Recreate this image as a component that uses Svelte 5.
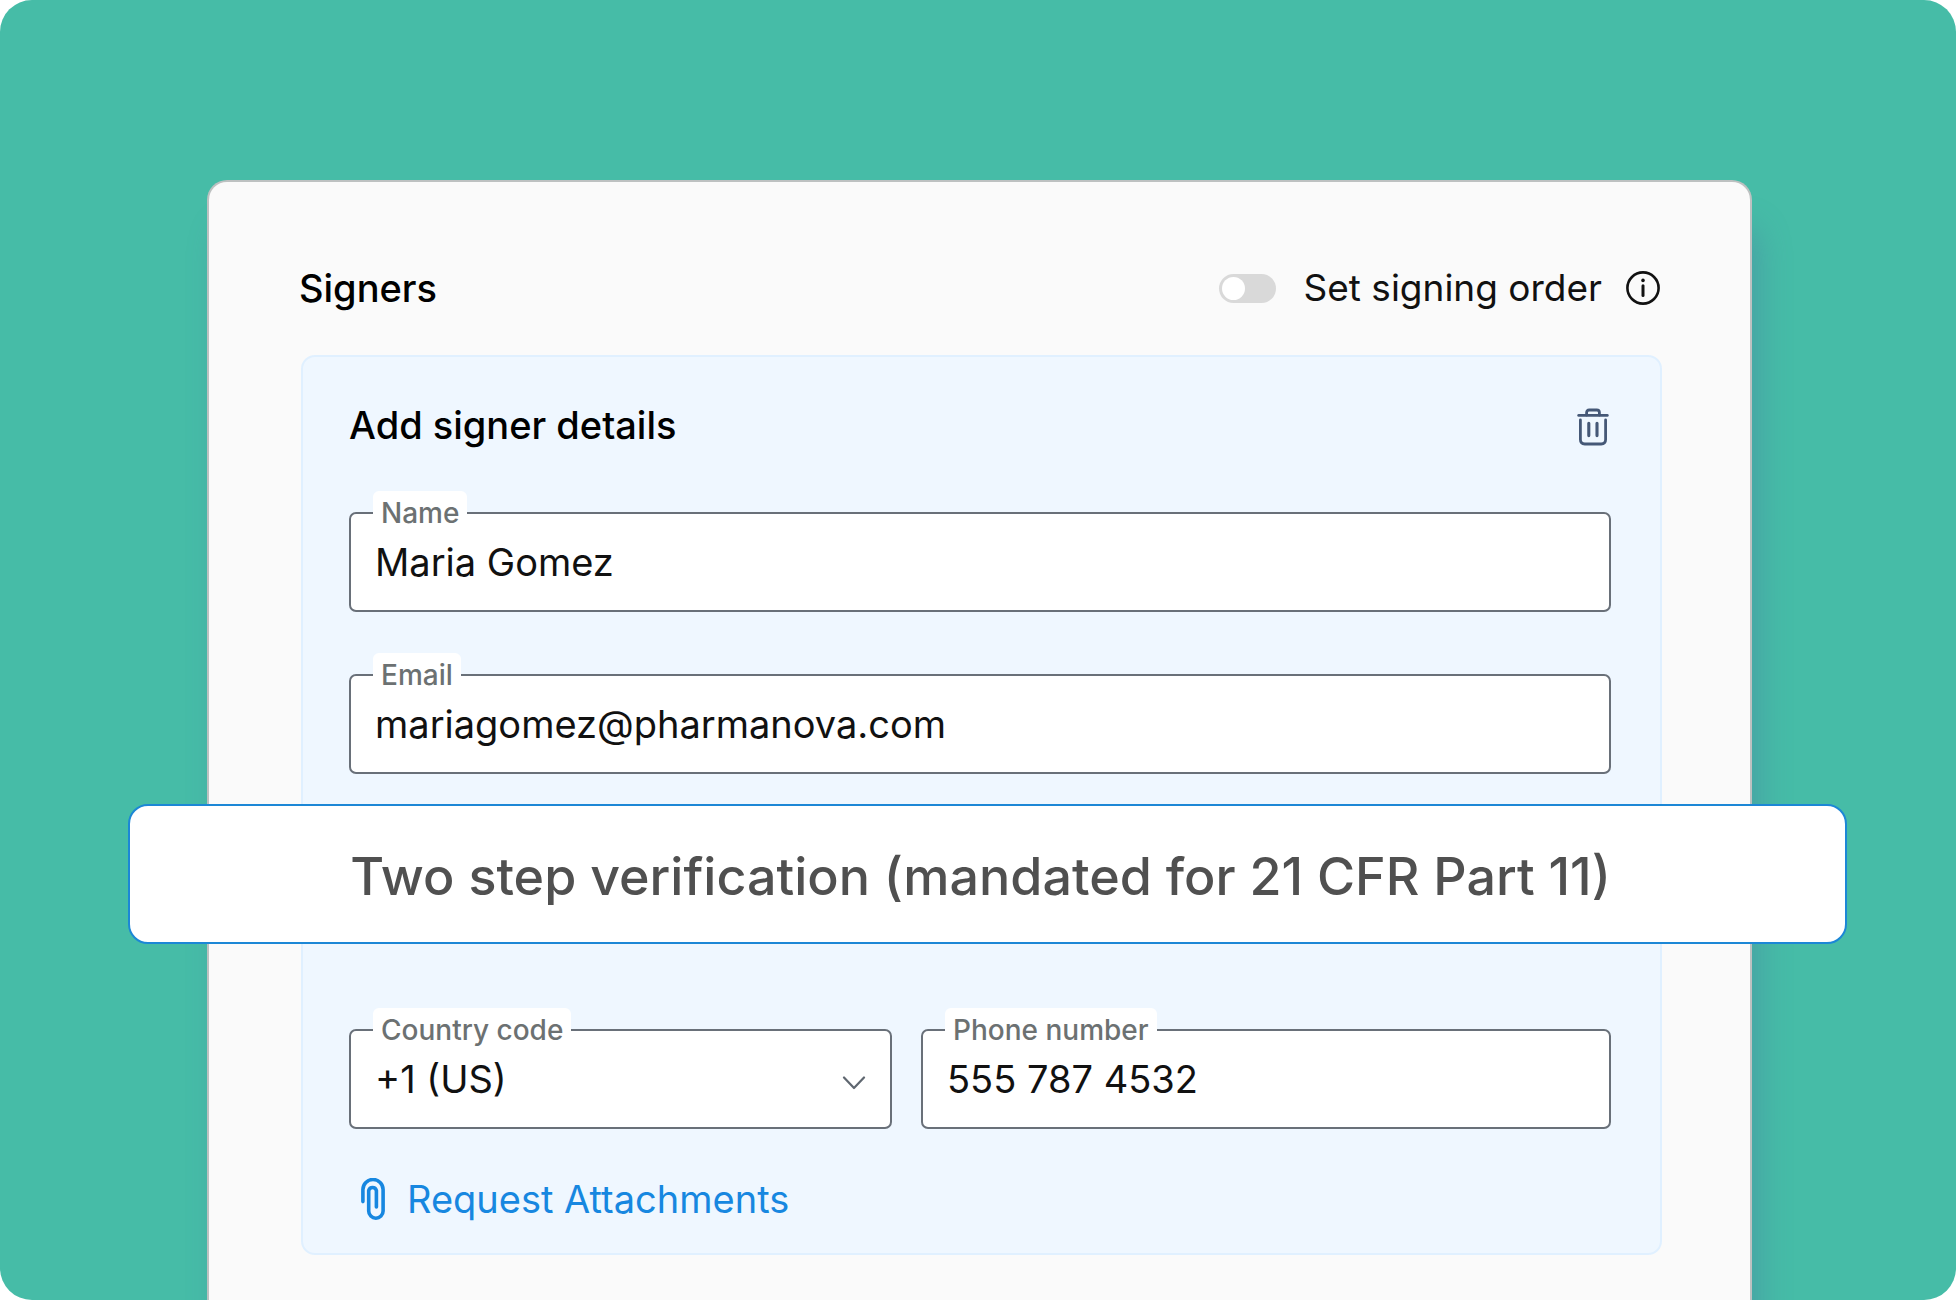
<script>
  let name = $state('Maria Gomez');
  let email = $state('mariagomez@pharmanova.com');
  let country = $state('+1 (US)');
  let phone = $state('555 787 4532');
  let ordered = $state(false);
</script>

<main class="stage">
  <section class="card">
    <header class="card-head">
      <h1>Signers</h1>
      <div class="order">
        <input id="order" class="switch" type="checkbox" role="switch" bind:checked={ordered} />
        <label for="order">Set signing order</label>
        <button class="icon-button" type="button" aria-label="About signing order">
          <svg width="34" height="34" viewBox="0 0 34 34" fill="none" stroke="#111" stroke-linecap="round">
            <circle cx="17" cy="17" r="15.6" stroke-width="2.6" />
            <path d="M17 14.8V24.6" stroke-width="3" />
            <circle cx="17" cy="9.4" r="1.8" fill="#111" stroke="none" />
          </svg>
        </button>
      </div>
    </header>

    <form class="panel">
      <div class="panel-head">
        <h2>Add signer details</h2>
        <button class="icon-button delete" type="button" aria-label="Delete signer">
          <svg width="32" height="38" viewBox="0 0 32 38" fill="none" stroke="#455877" stroke-width="2.8" stroke-linecap="round" stroke-linejoin="round">
            <path d="M1.7 7.4H30.3" />
            <path d="M9.6 7V4.6Q9.6 2 12.2 2H19.8Q22.4 2 22.4 4.6V7" />
            <path d="M3.4 12V31.6Q3.4 36 7.8 36H24.2Q28.6 36 28.6 31.6V12" />
            <path d="M11.8 15.3V27.6M20 15.3V27.6" stroke-width="3.1" />
          </svg>
        </button>
      </div>

      <div class="field">
        <label for="name">Name</label>
        <input id="name" type="text" bind:value={name} />
      </div>
      <div class="field">
        <label for="email">Email</label>
        <input id="email" type="email" bind:value={email} />
      </div>

      <p class="banner">Two step verification (mandated for 21 CFR Part 11)</p>

      <div class="row">
        <div class="field">
          <label for="country">Country code</label>
          <select id="country" bind:value={country}>
            <option>+1 (US)</option>
            <option>+44 (UK)</option>
          </select>
          <svg class="chevron" width="24" height="14" viewBox="0 0 24 14" fill="none" stroke="#5f6770" stroke-width="2.2" stroke-linecap="round" stroke-linejoin="round" aria-hidden="true">
            <path d="M2 1.5L12 12L22 1.5" />
          </svg>
        </div>
        <div class="field">
          <label for="phone">Phone number</label>
          <input id="phone" type="tel" bind:value={phone} />
        </div>
      </div>

      <a class="attach" href="#attachments">
        <svg width="24" height="42" viewBox="0 0 24 42" fill="none" stroke="#1787e0" stroke-width="3.6" stroke-linecap="round" aria-hidden="true">
          <path d="M1.9 23.6V11.6A10.1 10.1 0 0 1 22.1 11.6V33A7.2 7.2 0 0 1 7.7 33V12.4A4 4 0 0 1 15.4 12.4V29" />
        </svg>
        Request Attachments
      </a>
    </form>
  </section>
</main>

<style>
  :global(body) {
    background: #fff;
  }

  .stage {
    box-sizing: border-box;
    display: flex;
    height: 100vh;
    min-height: 1300px;
    padding: 180px 204px 0 207px;
    overflow: hidden;
    border-radius: 32px;
    background: #46bca7;
    color: #111;
    font-family: Inter, 'Liberation Sans', sans-serif;
    font-size: 38px;
    line-height: 46px;
  }

  .card {
    flex: 1;
    min-width: 0;
    padding: 82px 88px 0 92px;
    border: 2px solid #bdc1c1;
    border-bottom: 0;
    border-radius: 20px 20px 0 0;
    background: #fafafa;
    box-shadow: 10px 44px 32px -4px rgba(72, 116, 160, 0.4);
  }

  h1,
  h2 {
    margin: 0;
    color: #000;
    font-size: 38px;
    font-weight: 500;
    line-height: 46px;
  }

  .card-head,
  .panel-head,
  .order {
    display: flex;
    align-items: center;
    justify-content: space-between;
  }

  .card-head {
    margin: 0 2px 44px -2px;
  }

  .order {
    padding-top: 1px;
  }

  .order label {
    margin: 0 24px 0 28px;
    font-size: 37px;
  }

  .switch {
    appearance: none;
    display: flex;
    align-items: center;
    box-sizing: border-box;
    width: 57px;
    height: 29px;
    margin: 0;
    padding: 0 3px;
    border-radius: 15px;
    background: #d9d9d9;
  }

  .switch::before {
    content: '';
    width: 23px;
    height: 23px;
    border-radius: 50%;
    background: #fff;
  }

  .switch:checked {
    justify-content: flex-end;
    background: #1787e0;
  }

  .icon-button {
    display: flex;
    padding: 0;
    border: 0;
    background: none;
    cursor: pointer;
  }

  .icon-button.delete {
    padding-top: 4px;
  }

  .panel {
    display: flex;
    flex-direction: column;
    padding: 45px 49px 31px 46px;
    border: 2px solid #e0f0ff;
    border-radius: 14px;
    background: #eff7ff;
  }

  .panel-head {
    margin: 0 2px 64px 0;
  }

  .field {
    position: relative;
  }

  .field + .field {
    margin-top: 62px;
  }

  .field label {
    position: absolute;
    top: -21px;
    left: 24px;
    padding: 0 8px;
    border-radius: 6px;
    background: #fff;
    color: #6c7172;
    font-size: 28px;
    font-weight: 500;
    line-height: 44px;
  }

  .field input,
  .field select {
    appearance: none;
    display: block;
    box-sizing: border-box;
    width: 100%;
    height: 100px;
    margin: 0;
    padding: 0 24px;
    border: 2px solid #697079;
    border-radius: 7px;
    background: #fff;
    color: #111;
    font: inherit;
  }

  .chevron {
    position: absolute;
    top: 47px;
    right: 26px;
    pointer-events: none;
  }

  .banner {
    z-index: 1;
    margin: 30px -236px 85px -221px;
    padding: 39px 38px 33px 24px;
    border: 2px solid #1c87d6;
    border-radius: 20px;
    background: #fff;
    color: #505050;
    font-size: 52px;
    font-weight: 500;
    line-height: 64px;
    text-align: center;
  }

  .row {
    display: grid;
    grid-template-columns: 543fr 690fr;
    gap: 29px;
  }

  .row .field {
    margin: 0;
  }

  .attach {
    display: flex;
    align-items: center;
    gap: 22px;
    align-self: flex-start;
    margin: 47px 0 0 12px;
    color: #1787e0;
    text-decoration: none;
  }
</style>
